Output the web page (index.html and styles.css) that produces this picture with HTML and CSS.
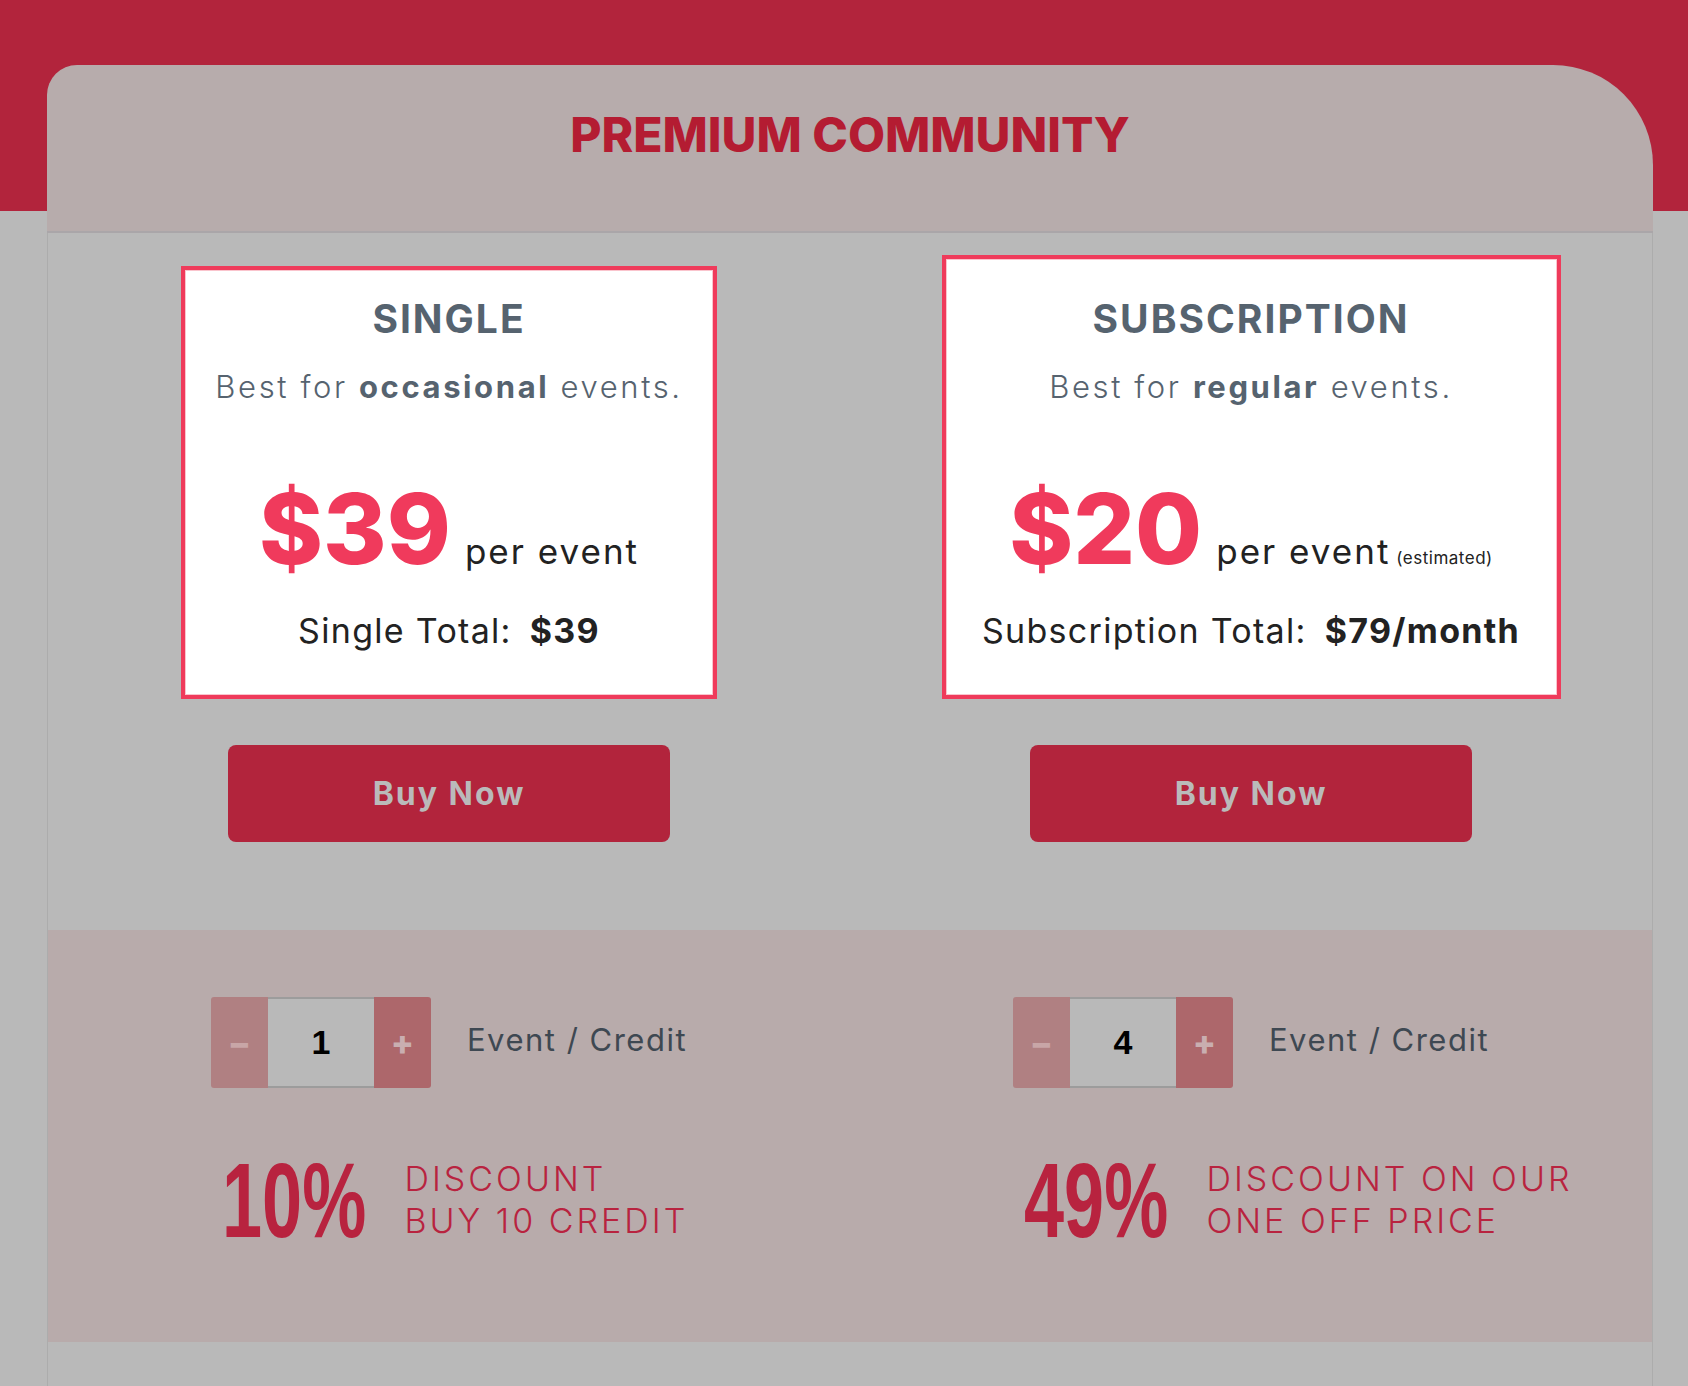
FILE: index.html
```html
<!DOCTYPE html>
<html lang="en">

<head>
    <meta charset="UTF-8">
    <meta name="viewport" content="width=device-width, initial-scale=1.0">
    <title>Premium Community</title>
    <link rel="stylesheet" href="styles.css">
</head>

<body>
    <div class="container">
        <div class="header">
            <h1 class="title">PREMIUM COMMUNITY</h1>
        </div>
        <div class="content">
            <div class="plans">
                <div class="plan">
                    <div class="card card-single">
                        <h2 class="card-title">SINGLE</h2>
                        <p class="card-text">Best for <b>occasional</b> events.</p>
                        <div class="price">$39<span class="per">per event</span></div>
                        <p class="total">Single Total:<b>$39</b></p>
                    </div>
                    <button class="button">Buy Now</button>
                </div>
                <div class="plan">
                    <div class="card card-sub">
                        <h2 class="card-title">SUBSCRIPTION</h2>
                        <p class="card-text">Best for <b>regular</b> events.</p>
                        <div class="price">$20<span class="per">per event</span><span class="note">(estimated)</span></div>
                        <p class="total">Subscription Total:<b>$79/month</b></p>
                    </div>
                    <button class="button">Buy Now</button>
                </div>
            </div>
            <div class="options">
                <div class="option">
                    <div class="qty-row">
                        <div class="stepper">
                            <button class="step minus">&minus;</button>
                            <input class="qty" type="text" value="1">
                            <button class="step plus">+</button>
                        </div>
                        <span class="qty-label">Event / Credit</span>
                    </div>
                    <div class="discount">
                        <span class="percent">10%</span>
                        <span class="discount-text">DISCOUNT<br>BUY 10 CREDIT</span>
                    </div>
                </div>
                <div class="option">
                    <div class="qty-row">
                        <div class="stepper">
                            <button class="step minus">&minus;</button>
                            <input class="qty" type="text" value="4">
                            <button class="step plus">+</button>
                        </div>
                        <span class="qty-label">Event / Credit</span>
                    </div>
                    <div class="discount">
                        <span class="percent">49%</span>
                        <span class="discount-text">DISCOUNT ON OUR<br>ONE OFF PRICE</span>
                    </div>
                </div>
            </div>
            <div class="bottom"></div>
        </div>
    </div>
</body>

</html>
```

FILE: styles.css
```css
body {
    margin: 0;
    font-family: Inter, "Noto Sans", sans-serif;
    background: linear-gradient(#b2243c 0, #b2243c 211px, #b9b9b9 211px);
}

.container {
    width: 1606px;
    margin: 65px 0 0 47px;
}

.header {
    height: 166px;
    background-color: #b7acac;
    border-radius: 30px 100px 0 0;
    border-bottom: 2px solid #aaa6a9;
    box-sizing: content-box;
}

.title {
    margin: 0;
    padding-top: 46px;
    font-size: 48px;
    font-weight: 800;
    line-height: 1;
    text-align: center;
    color: #b41c32;
}

.content {
    background-color: #b9b9b9;
    border-left: 1px solid #acacac;
    border-right: 1px solid #acacac;
}

.plans {
    display: grid;
    grid-template-columns: 1fr 1fr;
    align-items: end;
    padding: 22px 0 88px;
}

.plan {
    display: flex;
    flex-direction: column;
    align-items: center;
    gap: 46px;
}

.card {
    box-sizing: border-box;
    background-color: #fff;
    border: 4px solid #ef3b5b;
    box-shadow: inset 0 0 0 1px rgba(239, 59, 91, 0.3);
    text-align: center;
    padding: 29px 10px 47px;
}

.card-single {
    width: 536px;
}

.card-sub {
    width: 619px;
    padding-top: 40px;
}

.card-title {
    margin: 0 0 33px;
    font-size: 39px;
    font-weight: 700;
    line-height: 1;
    letter-spacing: 2px;
    color: #56636f;
}

.card-text {
    margin: 0 0 78px;
    font-size: 31px;
    font-weight: 300;
    line-height: 1;
    letter-spacing: 2.6px;
    color: #56636f;
}

.card-text b {
    font-weight: 700;
}

.price {
    margin-bottom: 37px;
    font-size: 97px;
    font-weight: 800;
    line-height: 1;
    color: #f03a5c;
    white-space: nowrap;
}

.per {
    margin-left: 14px;
    font-size: 35px;
    font-weight: 400;
    letter-spacing: 2px;
    color: #222;
}

.note {
    margin-left: 6px;
    font-size: 17px;
    font-weight: 400;
    letter-spacing: 0.5px;
    color: #222;
}

.total {
    margin: 0;
    font-size: 34px;
    line-height: 1;
    letter-spacing: 1.3px;
    color: #222;
    white-space: nowrap;
}

.total b {
    margin-left: 18px;
    font-weight: 700;
}

.button {
    width: 442px;
    height: 97px;
    border: none;
    border-radius: 8px;
    background-color: #b2243c;
    color: #bababa;
    font-family: Inter, "Noto Sans", sans-serif;
    font-size: 32px;
    font-weight: 700;
    letter-spacing: 2px;
    cursor: pointer;
}

.options {
    display: grid;
    grid-template-columns: 1fr 1fr;
    padding: 67px 0 89px;
    background-color: #b8abab;
}

.option {
    display: flex;
    flex-direction: column;
    align-items: center;
    gap: 59px;
}

.qty-row {
    display: flex;
    align-items: center;
    gap: 36px;
}

.stepper {
    display: flex;
    height: 91px;
    border-radius: 3px;
    overflow: hidden;
}

.step {
    width: 57px;
    border: none;
    padding: 0;
    font-family: Inter, "Noto Sans", sans-serif;
    font-size: 34px;
    font-weight: 800;
    cursor: pointer;
}

.minus {
    background-color: #b08082;
    color: #c8a6a7;
}

.plus {
    background-color: #ad676b;
    color: #c9aeb0;
}

.qty {
    box-sizing: border-box;
    width: 106px;
    height: 91px;
    margin: 0;
    padding: 0;
    border: none;
    border-top: 2px solid #9c9c9c;
    border-bottom: 2px solid #9c9c9c;
    background-color: #b9b9b9;
    font-family: "Liberation Sans", Arial, sans-serif;
    font-size: 34px;
    font-weight: 700;
    text-align: center;
    color: #000;
}

.qty-label {
    padding-bottom: 6px;
    font-size: 31px;
    letter-spacing: 1.5px;
    color: #3e4852;
}

.discount {
    display: flex;
    align-items: center;
    gap: 40px;
    margin-left: 8px;
    color: #b8233f;
}

.percent {
    display: inline-block;
    width: 143px;
    font-family: "Liberation Sans", Arial, sans-serif;
    font-size: 106px;
    font-weight: 700;
    line-height: 1;
    white-space: nowrap;
    transform: scaleX(0.68);
    transform-origin: left center;
}

.discount-text {
    width: 280px;
    font-size: 34px;
    font-weight: 300;
    line-height: 42.5px;
    letter-spacing: 3px;
    white-space: nowrap;
}

.bottom {
    height: 60px;
}
```
